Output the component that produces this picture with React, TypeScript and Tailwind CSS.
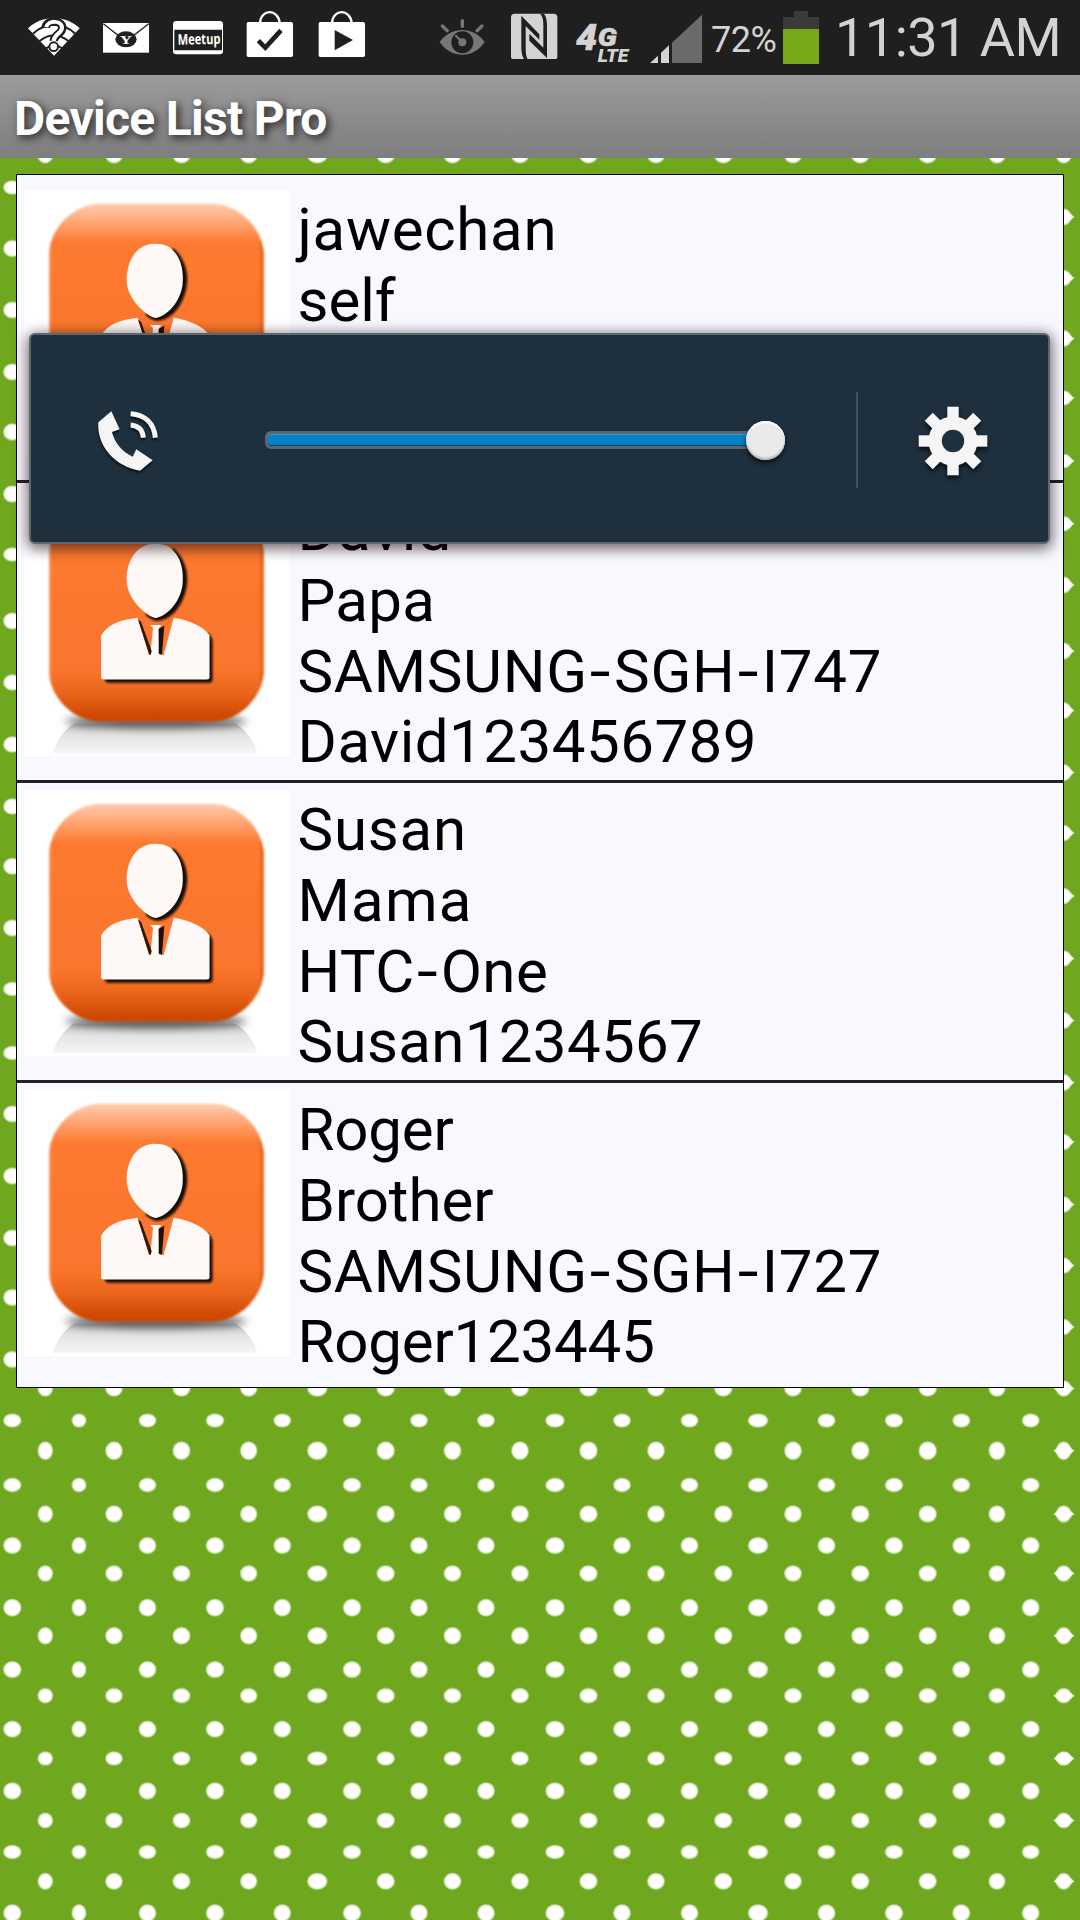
import type { ReactNode } from "react";

interface Line {
  text: string;
  tracking?: string;
}

const devices: Line[][] = [
  [{ text: "jawechan", tracking: "tracking-[0.7px]" }, { text: "self" }],
  [
    { text: "David", tracking: "tracking-[1.2px]" },
    { text: "Papa", tracking: "tracking-[0.3px]" },
    { text: "SAMSUNG-SGH-I747", tracking: "tracking-[0.7px]" },
    { text: "David123456789", tracking: "tracking-[0.5px]" },
  ],
  [
    { text: "Susan", tracking: "tracking-[0.8px]" },
    { text: "Mama", tracking: "tracking-[1.2px]" },
    { text: "HTC-One", tracking: "tracking-[0.4px]" },
    { text: "Susan1234567", tracking: "tracking-[0.35px]" },
  ],
  [
    { text: "Roger", tracking: "tracking-[-0.2px]" },
    { text: "Brother" },
    { text: "SAMSUNG-SGH-I727", tracking: "tracking-[0.7px]" },
    { text: "Roger123445", tracking: "tracking-[-0.2px]" },
  ],
];

// Wallpaper dots: [centre, radius] of every column and row
const evenCols = [[12.3, 9], [79, 7.3], [147.5, 8.7], [215, 9], [282.3, 8.7], [352, 9], [419, 8.7], [486, 8.7], [555, 9.5], [622, 8.7], [689.5, 8.7], [758, 10], [826.5, 8.8], [894, 9], [961.3, 8.8], [1030.7, 8.7]];
const oddCols = [[45.3, 7.6], [114, 8.6], [181.5, 8.8], [248.7, 8.5], [317.3, 10], [385.7, 9], [452.5, 8.7], [520, 8.7], [588.5, 9], [656, 8.7], [723.3, 9], [793, 8.7], [860.3, 8.9], [927.7, 9], [997, 8.3], [1063.7, 7.6]];
const evenRows = [[187.5, 7], [248.5, 8.3], [310, 8.3], [372, 8.3], [432, 8.5], [494, 8.5], [554.5, 7], [621, 8.3], [682.5, 8], [744.5, 8], [806.5, 8], [866.3, 8.3], [928, 8.3], [989, 7], [1053, 7], [1114, 8.3], [1176, 8.3], [1238, 8.3], [1297.5, 8.3], [1359.5, 8.3], [1420.5, 6.9], [1485, 7.1], [1545.5, 8.3], [1607.7, 8.7], [1669.6, 8.3], [1729.2, 8.3], [1791, 8.5], [1852, 7], [1913, 8.6]];
const oddRows = [[155.3, 8], [217, 8.3], [278, 8], [338.5, 8.3], [398, 7.5], [461, 7], [523.7, 7.5], [585, 8.3], [651, 8.3], [710.6, 8.3], [772.6, 8.3], [833, 8], [896, 8], [958.5, 8], [1020.5, 8.3], [1082.5, 8.3], [1142, 8], [1204.5, 8], [1265.5, 8], [1327, 8], [1388.5, 8], [1450.7, 9.2], [1514, 8.5], [1573.5, 8.1], [1635.8, 8.6], [1695.7, 7.5], [1758.5, 7], [1820.5, 7.7], [1881.3, 8.3]];

const DotWallpaper = () => (
  <svg className="absolute inset-0" width="1080" height="1762" viewBox="0 158 1080 1762">
    <rect y="158" width="1080" height="1762" fill="#6fa71e" />
    <g fill="#fff" stroke="#b9d690" strokeOpacity="0.6" strokeWidth="1.8">
      {evenRows.map(([y, ry]) => evenCols.map(([x, rx]) => <ellipse key={`${x}-${y}`} cx={x} cy={y} rx={rx - 0.3} ry={ry - 0.3} />))}
      {oddRows.map(([y, ry]) => oddCols.map(([x, rx]) => <ellipse key={`${x}-${y}`} cx={x} cy={y} rx={rx - 0.3} ry={ry - 0.3} />))}
    </g>
    {/* the last column runs into small side tips */}
    {oddRows.map(([y]) => (
      <path key={y} d={`M1053.5 ${y}L1061 ${y - 6}H1067L1074.5 ${y}L1067 ${y + 6}H1061Z`} fill="#fff" fillOpacity="0.85" />
    ))}
  </svg>
);

const Avatar = () => (
  <svg className="h-[266px] w-[266px] shrink-0 bg-white" viewBox="0 -2 800 800">
    <defs>
      <linearGradient id="tile" x1="0" y1="0" x2="0" y2="1">
        <stop offset="0" stopColor="#ffcdb2" />
        <stop offset="0.08" stopColor="#ffa878" />
        <stop offset="0.18" stopColor="#fd7a30" />
        <stop offset="0.76" stopColor="#fb752d" />
        <stop offset="0.87" stopColor="#ea651c" />
        <stop offset="0.98" stopColor="#cd4700" />
        <stop offset="1" stopColor="#c84c0c" />
      </linearGradient>
      <linearGradient id="mirror" x1="0" y1="0" x2="0" y2="1">
        <stop offset="0" stopColor="#c4c4c4" />
        <stop offset="0.4" stopColor="#e4e4e4" />
        <stop offset="1" stopColor="#f6f6f6" />
      </linearGradient>
      <linearGradient id="edge" x1="0" y1="0" x2="1" y2="0">
        <stop offset="0" stopColor="#fff" stopOpacity="0.4" />
        <stop offset="0.02" stopColor="#e05a10" stopOpacity="0" />
        <stop offset="0.975" stopColor="#c84800" stopOpacity="0" />
        <stop offset="1" stopColor="#c84800" stopOpacity="0.6" />
      </linearGradient>
      <filter id="soft" x="-20%" y="-100%" width="140%" height="300%">
        <feGaussianBlur stdDeviation="13" />
      </filter>
      <filter id="dark" x="-10%" y="-10%" width="120%" height="120%">
        <feGaussianBlur stdDeviation="2.5" />
      </filter>
    </defs>
    <path d="M150 700H635C670 720 692 755 702 790H85C98 750 118 722 150 700Z" fill="url(#mirror)" />
    <ellipse cx="397" cy="694" rx="272" ry="20" fill="#555" filter="url(#soft)" />
    <g filter="url(#dark)">
      <path d="M222 39H574C650 45 714 110 721 185V550C714 625 650 689 574 695H222C146 689 82 625 75 550V185C82 110 146 45 222 39Z" fill="url(#tile)" />
      <path d="M222 39H574C650 45 714 110 721 185V550C714 625 650 689 574 695H222C146 689 82 625 75 550V185C82 110 146 45 222 39Z" fill="url(#edge)" />
    </g>
    <g fill="#150c08" filter="url(#dark)">
      <path d="M448 172C476 196 492 232 491 270C488 330 452 388 400 392C386 390 376 382 366 374Z" />
      <path d="M552 428C564 436 568 448 567 460V568C566 576 562 578 554 578H250L240 566Z" />
    </g>
    <path d="M393 160C424 160 440 168 457 190C474 213 480 245 477 280C474 322 440 374 397 383C372 380 309 328 309 270C308 210 340 160 393 160Z" fill="#fef9f6" />
    <path
      d="M342 382L376 494L384 416L377 404H413L405 416L408 494L450 382C498 390 536 406 558 434V562Q558 568 550 568H240Q232 568 232 560V436C250 402 290 388 342 382Z"
      fill="#fef9f6"
    />
    <path d="M344 382L366 392L388 412L380 494L376 494Z" fill="#fd772e" />
    <path d="M450 382L430 392L424 412L414 494L420 494Z" fill="#fd772e" />
    <path d="M343 388L352 394L384 482L381 494L376 490Z" fill="#2a1710" />
    <path d="M405 416L422 406L415 494L405 490Z" fill="#1b100b" />
  </svg>
);

const DeviceLine = ({ text, tracking }: Line) => (
  <p className={tracking}>
    {text.split("-").map((part, i) => (
      <span key={i}>
        {i > 0 && <span className="mx-[4.5px] inline-block scale-x-125">-</span>}
        {part}
      </span>
    ))}
  </p>
);

const DeviceRow = ({ lines }: { lines: Line[] }) => (
  <li className="flex h-[300px] border-b-[3px] border-[#222] pt-[7px] pl-[7px] last:border-b-0">
    <Avatar />
    <div className="mt-[5px] ml-[7.5px] text-[60px] leading-[70.8px] text-black">
      {lines.map((line) => (
        <DeviceLine key={line.text} {...line} />
      ))}
    </div>
  </li>
);

const ShoppingBag = ({ children }: { children: ReactNode }) => (
  <svg width="48" height="48" viewBox="737 33 144 144">
    <path d="M779 68C783 26 833 26 838 68" fill="none" stroke="#fff" strokeWidth="7" />
    <rect x="739" y="66" width="139" height="105" rx="5" fill="#fff" />
    {children}
  </svg>
);

const StatusBar = () => (
  <header className="flex h-[75px] bg-[#1f1f1f] text-[#d3d3d3]">
    <div className="flex pt-[11px] pl-[27px]">
      {/* wifi */}
      <svg width="54" height="48" viewBox="81 33 162 144">
        <path d="M84 85C128 44 195 44 239 85L162 167Z" fill="#fff" />
        <path d="M99 101C138 65 187 65 226 101M119 123C145 101 178 101 205 123M139 145C154 132 170 132 186 145" fill="none" stroke="#1f1f1f" strokeWidth="6" />
        <path d="M137 84C137 58 187 58 187 84C187 102 162 102 161 123" fill="none" stroke="#1f1f1f" strokeWidth="25" />
        <circle cx="161" cy="140" r="16" fill="#1f1f1f" />
        <path d="M139 82C142 60 186 60 186 83C186 101 162 101 161 123" fill="none" stroke="#fff" strokeWidth="12" />
        <circle cx="161" cy="140" r="10" fill="#fff" />
      </svg>
      {/* mail */}
      <svg className="ml-[21px]" width="48" height="48" viewBox="306 33 144 144">
        <rect x="309" y="69" width="138" height="89" fill="#fff" />
        <path d="M310 71L354 106M446 71L402 106" stroke="#1f1f1f" strokeWidth="4" />
        <ellipse cx="378" cy="118" rx="32" ry="24" fill="#1f1f1f" />
        <text transform="translate(378 132) scale(1.35 1)" textAnchor="middle" fontFamily="Liberation Serif, serif" fontWeight="700" fontSize="38" fill="#fff">
          Y
        </text>
      </svg>
      {/* meetup */}
      <svg className="ml-[22px]" width="52" height="48" viewBox="516 33 156 144">
        <rect x="519" y="63" width="150" height="100" rx="10" fill="#fff" />
        <path d="M523 89H666V151H523Z" fill="#1f1f1f" />
        <text transform="translate(533 134) rotate(-1) scale(0.76 1)" fontFamily="Open Sans, sans-serif" fontWeight="700" fontSize="44" fill="#fff">
          Meetup
        </text>
      </svg>
      <div className="ml-[22px]">
        <ShoppingBag>
          <path d="M774 122L795 143L842 91" fill="none" stroke="#1f1f1f" strokeWidth="14" />
        </ShoppingBag>
      </div>
      <div className="ml-[24px]">
        <ShoppingBag>
          <path d="M787 90L842 120L787 151Z" fill="#1f1f1f" />
        </ShoppingBag>
      </div>
    </div>
    <div className="ml-auto flex pt-[11px] pr-[21px]">
      {/* smart stay */}
      <svg width="48" height="48" viewBox="115 33 144 144">
        <path d="M117 126C150 78 219 78 252 126C219 177 150 177 117 126Z" fill="#777" />
        <circle cx="185" cy="127" r="33" fill="#1f1f1f" />
        <circle cx="185" cy="127" r="12" fill="#777" />
        <path d="M184 125L164 106" stroke="#777" strokeWidth="6" />
        <path d="M185 62V79M125 78L140 92M244 78L229 92" stroke="#777" strokeWidth="10" strokeLinecap="round" />
      </svg>
      {/* nfc */}
      <svg className="ml-[24px]" width="48" height="48" viewBox="332 33 144 144">
        <rect x="332" y="41" width="139" height="139" rx="11" fill="#d3d3d3" />
        <path d="M363 47L417 103V119L376 78V145C376 165 379 175 384 180H374C366 172 363 160 363 140Z" fill="#1f1f1f" />
        <path d="M440 174L387 122V101L429 143V75C429 55 425 45 418 41H430C437 47 440 60 440 80Z" fill="#1f1f1f" />
      </svg>
      {/* network type */}
      <svg className="ml-[16px]" width="60" height="56" viewBox="525 33 180 168">
        <g fill="#d3d3d3" stroke="#d3d3d3" fontFamily="Roboto, sans-serif" fontWeight="900" fontStyle="italic">
          <text x="528" y="151" fontSize="113" strokeWidth="2">
            4
          </text>
          <text transform="translate(593 138) scale(1.15 1)" fontSize="75" strokeWidth="2">
            G
          </text>
          <text transform="translate(593 187) scale(1.08 1)" fontSize="54" strokeWidth="0">
            LTE
          </text>
        </g>
      </svg>
      {/* signal */}
      <svg className="ml-[15px]" width="52" height="52" viewBox="750 33 156 156">
        <path d="M750 189L774 167V189ZM783 158L807 136V189H783Z" fill="#d3d3d3" />
        <path d="M816 128L906 44V189H816Z" fill="#6a6a6a" />
      </svg>
      <span className="-mt-[11px] ml-[9px] w-[72px] text-[36px] leading-[81px] tracking-[-0.5px]">72%</span>
      {/* battery */}
      <svg width="36" height="53" viewBox="0 0 36 53">
        <path d="M11 0H25V6H36V18H0V6H11Z" fill="#3a3a3a" />
        <rect y="18" width="36" height="35" fill="#77a919" />
      </svg>
      <span className="-mt-[11px] ml-[16px] w-[224px] text-[54px] leading-[75px] tracking-[-0.5px] whitespace-nowrap">11:31 AM</span>
    </div>
  </header>
);

const VolumePanel = () => (
  <div className="absolute top-[333px] left-[29px] flex h-[211px] w-[1021px] items-center rounded-[6px] border-2 border-[#5c6770] bg-[#1e2f3d] pt-[3px] shadow-[0_3px_14px_2px_rgba(20,0,10,0.6)]">
    <svg className="mt-[3px] ml-[65px] drop-shadow-[0_2px_1px_rgba(0,0,0,0.7)]" width="66" height="66" viewBox="288 269 198 198">
      <path d="M334 276L359 330L336 338C344 370 366 397 398 412L409 390L458 423L420 454C345 442 290 380 295 309Z" fill="#f5f5f5" />
      <path d="M392 283C435 286 462 312 466 355M392 317C415 319 428 332 430 355" fill="none" stroke="#f5f5f5" strokeWidth="15" />
    </svg>
    <div className="ml-[103px] flex h-[18px] w-[502px] items-center rounded-[6px] border-[3px] border-[#5d666e] bg-[#0681c8] shadow-[inset_0_1px_0_#2a9be0,inset_0_-1px_0_#20404f]">
      <span className="-mr-[21px] ml-auto h-[39px] w-[39px] shrink-0 rounded-full bg-[#eaeaea] shadow-[0_3px_5px_rgba(0,0,0,0.7),inset_0_2px_1px_#fff,inset_0_-2px_2px_#b5b5b5]" />
    </div>
    <div className="ml-[89px] h-[96px] w-[2px] bg-[#45525d]" />
    <svg className="mt-[1px] ml-[59px] drop-shadow-[0_3px_2px_rgba(0,0,0,0.7)]" width="72" height="72" viewBox="-36 -36 72 72">
      <g fill="#f5f5f5">
        {[0, 45, 90, 135].map((angle) => (
          <rect key={angle} x="-5.7" y="-34.3" width="11.4" height="68.6" transform={`rotate(${angle})`} />
        ))}
        <circle r="24.5" />
      </g>
      <circle r="11.2" fill="#1e2f3d" />
    </svg>
  </div>
);

const App = () => {
  return (
    <div className="relative flex h-[1920px] w-[1080px] flex-col overflow-hidden font-['Roboto',sans-serif]">
      <StatusBar />
      <h1 className="h-[83px] bg-linear-to-b from-[#9b9b9b] to-[#7e7e7e] pl-[14px] text-[48px] leading-[87px] font-bold tracking-[-0.7px] text-white [text-shadow:3px_3px_9px_#222]">
        Device List Pro
      </h1>
      <main className="relative flex-1 px-[16px] pt-[16px]">
        <DotWallpaper />
        <ul className="relative h-[1214px] border border-black bg-[#f8f9ff] pt-[8px]">
          {devices.map((lines) => (
            <DeviceRow key={lines[0].text} lines={lines} />
          ))}
        </ul>
      </main>
      <VolumePanel />
    </div>
  );
};

export default App;
